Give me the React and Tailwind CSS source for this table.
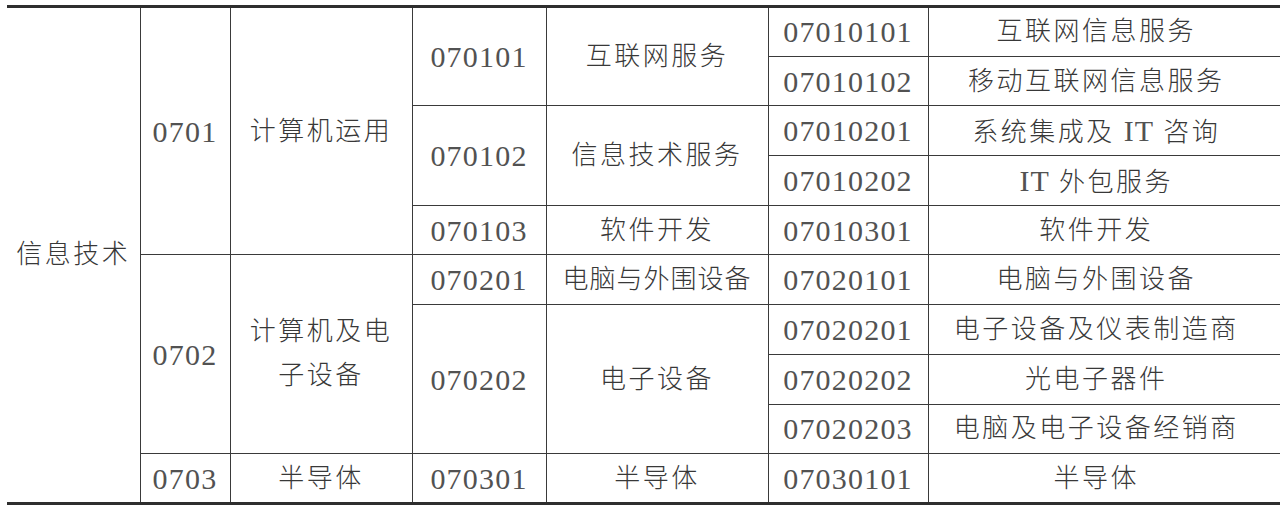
const cell = "border border-[#3a3a3a] text-center align-middle p-0 font-light";

const Cell = ({ children, rowSpan, className = "" }) => (
  <td rowSpan={rowSpan} className={`${cell} ${className}`}>
    {children}
  </td>
);

// digits and latin letters are set larger (and lighter) than the Chinese
const Num = ({ children }) => (
  <span className="text-[30px] tracking-[1.2px] font-normal text-[#525252]">{children}</span>
);

const Last = ({ children }) => (
  <Cell className="border-r-0 pr-[16px]">{children}</Cell>
);

export default function App() {
  return (
    <div className="w-[1280px] h-[513px] overflow-hidden bg-white pt-[5px] pl-[7px]">
      <table
        className="table-fixed border-collapse w-[1273px] text-[26px] tracking-[2.5px] text-[#383838] border-t-[3px] border-b-[3px] border-t-[#2e2e2e] border-b-[#2e2e2e]"
        style={{ fontFamily: '"Liberation Serif", "Noto Sans CJK SC", serif' }}
      >
        <colgroup>
          <col className="w-[133px]" />
          <col className="w-[90px]" />
          <col className="w-[182px]" />
          <col className="w-[134px]" />
          <col className="w-[222px]" />
          <col className="w-[160px]" />
          <col />
        </colgroup>
        <tbody>
          <tr className="h-[49.7px]">
            <Cell rowSpan={10} className="border-l-0">信息技术</Cell>
            <Cell rowSpan={5}><Num>0701</Num></Cell>
            <Cell rowSpan={5}>计算机运用</Cell>
            <Cell rowSpan={2}><Num>070101</Num></Cell>
            <Cell rowSpan={2}>互联网服务</Cell>
            <Cell><Num>07010101</Num></Cell>
            <Last>互联网信息服务</Last>
          </tr>
          <tr className="h-[49.7px]">
            <Cell><Num>07010102</Num></Cell>
            <Last>移动互联网信息服务</Last>
          </tr>
          <tr className="h-[49.7px]">
            <Cell rowSpan={2}><Num>070102</Num></Cell>
            <Cell rowSpan={2}>信息技术服务</Cell>
            <Cell><Num>07010201</Num></Cell>
            <Last>
              系统集成及 <Num>IT</Num> 咨询
            </Last>
          </tr>
          <tr className="h-[49.7px]">
            <Cell><Num>07010202</Num></Cell>
            <Last>
              <Num>IT</Num> 外包服务
            </Last>
          </tr>
          <tr className="h-[49.7px]">
            <Cell><Num>070103</Num></Cell>
            <Cell>软件开发</Cell>
            <Cell><Num>07010301</Num></Cell>
            <Last>软件开发</Last>
          </tr>
          <tr className="h-[49.7px]">
            <Cell rowSpan={4}><Num>0702</Num></Cell>
            <Cell rowSpan={4} className="leading-[44px]">
              计算机及电
              <br />
              子设备
            </Cell>
            <Cell><Num>070201</Num></Cell>
            <Cell className="tracking-[1px]">电脑与外围设备</Cell>
            <Cell><Num>07020101</Num></Cell>
            <Last>电脑与外围设备</Last>
          </tr>
          <tr className="h-[49.7px]">
            <Cell rowSpan={3}><Num>070202</Num></Cell>
            <Cell rowSpan={3}>电子设备</Cell>
            <Cell><Num>07020201</Num></Cell>
            <Last>电子设备及仪表制造商</Last>
          </tr>
          <tr className="h-[49.7px]">
            <Cell><Num>07020202</Num></Cell>
            <Last>光电子器件</Last>
          </tr>
          <tr className="h-[49.7px]">
            <Cell><Num>07020203</Num></Cell>
            <Last>电脑及电子设备经销商</Last>
          </tr>
          <tr className="h-[49.7px]">
            <Cell><Num>0703</Num></Cell>
            <Cell>半导体</Cell>
            <Cell><Num>070301</Num></Cell>
            <Cell>半导体</Cell>
            <Cell><Num>07030101</Num></Cell>
            <Last>半导体</Last>
          </tr>
        </tbody>
      </table>
    </div>
  );
}
